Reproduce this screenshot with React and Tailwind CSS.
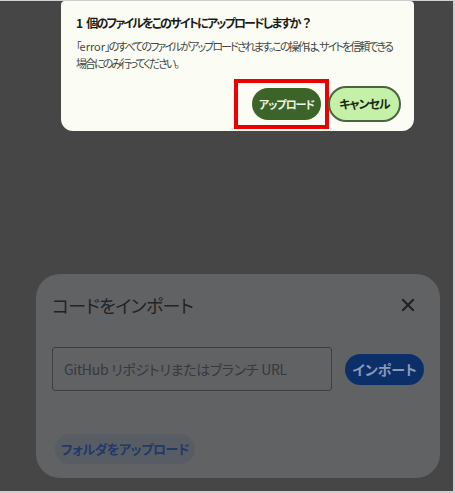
const jp = { fontFamily: '"Noto Sans CJK JP", "Noto Sans", sans-serif', fontFeatureSettings: '"palt"' };

export default function App() {
  return (
    <div
      className="w-[455px] h-[493px] bg-[#464646] border-t border-r-2 border-b-2 border-[#cfcfcf] flex flex-col overflow-hidden"
      style={jp}
    >
      {/* upload confirmation popup */}
      <div className="ml-[61px] w-[353px] h-[130px] bg-[#fbfcf4] rounded-b-[12px] rounded-t-[4px] flex flex-col pl-[15px] pr-[13px] pt-[12px]">
        <h1 className="text-[12px] leading-[20px] font-bold text-[#1b1c18] tracking-[-1.8px] whitespace-nowrap">
          <span className="mr-[5px]">1</span>個のファイルをこのサイトにアップロードしますか<span className="ml-[3px]">？</span>
        </h1>
        <p className="mt-[5px] text-[11px] leading-[17px] text-[#44473f] tracking-[-1.95px] whitespace-nowrap">
          「<span className="tracking-normal">error</span>」のすべてのファイルがアップロードされます。この操作は、サイトを信頼できる
          <br />
          場合にのみ行ってください。
        </p>
        <div className="mt-[7px] flex justify-end items-center">
          <div className="border-4 border-[#ee0000] pl-[14px] pr-[4px] py-[5px]">
            <button className="w-[69px] h-[32px] rounded-full bg-[#3c6428] text-[#eef3e6] text-[11px] font-bold tracking-[-1px]">
              アップロード
            </button>
          </div>
          <button className="-ml-px w-[73px] h-[36px] rounded-full bg-[#c5f0a8] border-2 border-[#4b6440] text-[#1b2a12] text-[12px] font-bold tracking-[-1px]">
            キャンセル
          </button>
        </div>
      </div>

      {/* dimmed import dialog */}
      <div className="mt-[143px] ml-[36px] w-[404px] h-[204px] bg-[#606264] rounded-[24px] flex flex-col pl-[16px] pr-[16px] pt-[18px]">
        <div className="flex items-center justify-between h-[26px]">
          <h2 className="text-[18px] leading-[26px] text-[#222324] tracking-[-0.6px]">コードをインポート</h2>
          <svg width="14" height="14" viewBox="0 0 14 14" className="mr-[9px]">
            <path d="M2 2 L12 12 M12 2 L2 12" stroke="#1f2021" strokeWidth="2" strokeLinecap="square" />
          </svg>
        </div>
        <div className="mt-[29px] flex items-center">
          <div className="w-[280px] h-[44px] border border-[#3d3e40] rounded-[3px] flex items-center pl-[11px]">
            <span className="text-[14px] text-[#38393b] tracking-[-0.3px] whitespace-nowrap">GitHub リポジトリまたはブランチ URL</span>
          </div>
          <button className="ml-[13px] w-[79px] h-[31px] rounded-full bg-[#0c2f6a] text-[#8b9ab6] text-[14px] font-bold">
            インポート
          </button>
        </div>
        <div className="mt-[43px]">
          <button className="ml-[3px] w-[140px] h-[30px] rounded-full bg-[#585d64] text-[#20386a] text-[13px] font-bold tracking-[-0.4px] whitespace-nowrap">
            フォルダをアップロード
          </button>
        </div>
      </div>
    </div>
  );
}
